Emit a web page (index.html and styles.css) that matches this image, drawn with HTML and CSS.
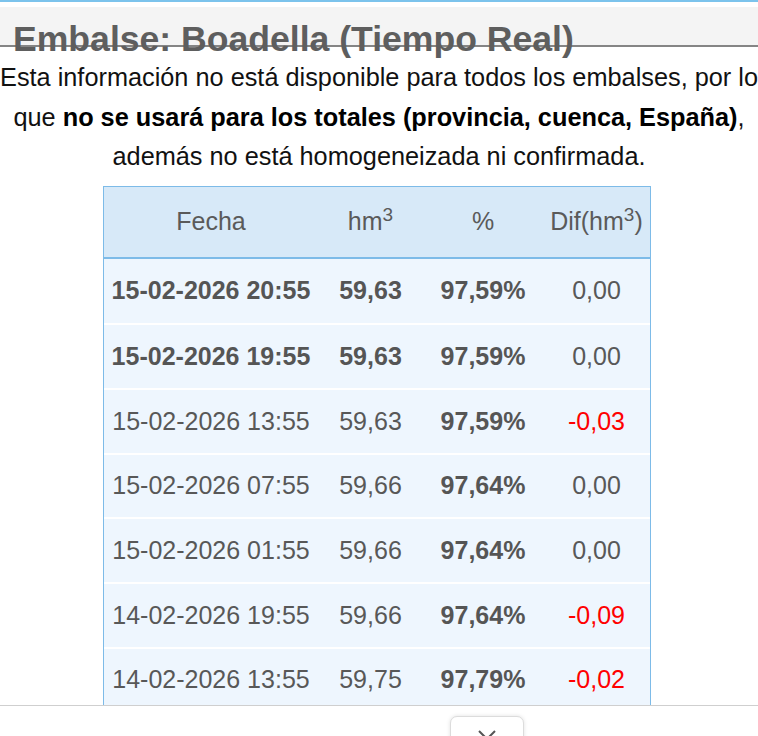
FILE: index.html
```html
<!DOCTYPE html>
<html lang="es">
<head>
<meta charset="utf-8">
<title>Embalse: Boadella (Tiempo Real)</title>
<link rel="stylesheet" href="styles.css">
</head>
<body>
<div class="topline"></div>
<div class="band">
  <h1 class="title">Embalse: Boadella (Tiempo Real)</h1>
</div>
<p class="note">Esta información no está disponible para todos los embalses, por lo que <b>no se usará para los totales (provincia, cuenca, España)</b>, además no está homogeneizada ni confirmada.</p>
<table class="data">
  <colgroup>
    <col class="c1"><col class="c2"><col class="c3"><col class="c4">
  </colgroup>
  <thead>
    <tr><th>Fecha</th><th>hm<sup>3</sup></th><th>%</th><th>Dif(hm<sup>3</sup>)</th></tr>
  </thead>
  <tbody>
    <tr><td><b>15-02-2026 20:55</b></td><td><b>59,63</b></td><td><b>97,59%</b></td><td>0,00</td></tr>
    <tr><td><b>15-02-2026 19:55</b></td><td><b>59,63</b></td><td><b>97,59%</b></td><td>0,00</td></tr>
    <tr><td>15-02-2026 13:55</td><td>59,63</td><td><b>97,59%</b></td><td class="neg">-0,03</td></tr>
    <tr><td>15-02-2026 07:55</td><td>59,66</td><td><b>97,64%</b></td><td>0,00</td></tr>
    <tr><td>15-02-2026 01:55</td><td>59,66</td><td><b>97,64%</b></td><td>0,00</td></tr>
    <tr><td>14-02-2026 19:55</td><td>59,66</td><td><b>97,64%</b></td><td class="neg">-0,09</td></tr>
    <tr><td>14-02-2026 13:55</td><td>59,75</td><td><b>97,79%</b></td><td class="neg">-0,02</td></tr>
  </tbody>
</table>
<div class="bottombar">
  <div class="tab">
    <svg class="chev" width="18" height="10" viewBox="0 0 18 10"><path d="M1 1 L9 9 L17 1" fill="none" stroke="#555" stroke-width="2"/></svg>
  </div>
</div>
</body>
</html>
```
FILE: styles.css
```css
html, body {
  margin: 0;
  padding: 0;
  background: #fff;
}
body {
  font-family: "Liberation Sans", Arial, sans-serif;
  font-size: 25px;
  color: #111;
  overflow: hidden;
  height: 736px;
}
.topline {
  height: 2px;
  background: #7cc3ec;
}
.band {
  margin-top: 5px;
  height: 38px;
  background: #f4f4f4;
  border-bottom: 2px solid #858585;
  padding-left: 13px;
}
.title {
  margin: 0;
  padding-top: 12px;
  font-size: 35.6px;
  font-weight: bold;
  line-height: 41px;
  color: #5e5e5e;
  white-space: nowrap;
  position: relative;
}
.note {
  margin: 11px 0 0;
  font-size: 25.3px;
  text-align: center;
  line-height: 39.5px;
  color: #111;
}
.note b {
  color: #000;
}
.data {
  margin: 9px 0 0 103px;
  width: 548px;
  border-collapse: separate;
  border-spacing: 0;
  table-layout: fixed;
  border: 1px solid #7dbbe8;
  color: #585858;
}
.c1 { width: 214px; }
.c2 { width: 105px; }
.c3 { width: 120px; }
.c4 { width: 107px; }
.data th {
  height: 70px;
  background: #d7e9f8;
  font-weight: normal;
  text-align: center;
  padding: 0;
  border-bottom: 2px solid #7dbbe8;
  color: #5a5a5a;
}
.data th sup {
  font-size: 19px;
  vertical-align: 9px;
  line-height: 0;
}
.data td {
  height: 62.7px;
  background: #eef6fe;
  text-align: center;
  padding: 0;
  border-top: 2px solid #fff;
  white-space: nowrap;
}
.data tbody tr:first-child td {
  border-top: 0;
  height: 64.7px;
}
.data td.neg {
  color: #f00;
}
.data b {
  color: #555;
}
.bottombar {
  position: fixed;
  left: 0;
  right: 0;
  top: 705px;
  height: 40px;
  background: #fff;
  border-top: 1px solid #cfcfcf;
}
.tab {
  position: absolute;
  left: 450px;
  top: 10px;
  width: 72px;
  height: 40px;
  background: #fff;
  border: 1px solid #dcdcdc;
  border-radius: 7px;
  box-shadow: 0 0 4px rgba(0,0,0,0.12);
  display: flex;
  justify-content: center;
}
.chev {
  margin-top: 13px;
}
```
